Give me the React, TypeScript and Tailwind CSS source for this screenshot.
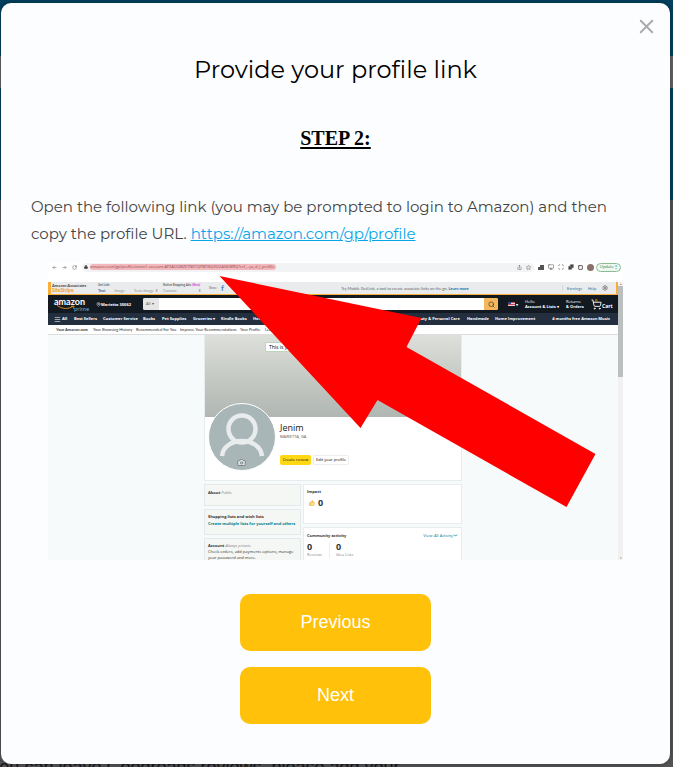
import React from "react";
import {
  ArrowLeft, ArrowRight, RotateCw, Lock, Star, Share, Monitor, Puzzle, Square, Scan,
  Settings, MapPin, Search, ShoppingCart, ChevronDown, ThumbsUp, Menu, Camera, X,
} from "lucide-react";

type Cell = { text: string; width: string };

const departments: Cell[] = [
  { text: "Best Sellers", width: "w-[29px]" },
  { text: "Customer Service", width: "w-[40px]" },
  { text: "Books", width: "w-[19px]" },
  { text: "Pet Supplies", width: "w-[31px]" },
  { text: "Groceries ▾", width: "w-[28px]" },
  { text: "Kindle Books", width: "w-[32px]" },
  { text: "Health & Household", width: "w-[160px]" },
  { text: "Beauty & Personal Care", width: "w-[54px]" },
  { text: "Handmade", width: "w-[28px]" },
  { text: "Home Improvement", width: "w-[52px]" },
  { text: "4 months free Amazon Music", width: "flex-1" },
];

const accountTabs: Cell[] = [
  { text: "Your Amazon.com", width: "w-[37px]" },
  { text: "Your Browsing History", width: "w-[43px]" },
  { text: "Recommended For You", width: "w-[44px]" },
  { text: "Improve Your Recommendations", width: "w-[60px]" },
  { text: "Your Profile", width: "w-[25px]" },
  { text: "Learn More", width: "w-[30px]" },
];

function BrowserBar() {
  return (
    <div className="flex h-5 items-start bg-white text-[4px] text-[#444]">
      <div className="flex h-[10px] w-full items-center pl-1">
        <ArrowLeft size={5} className="mr-[5px]" />
        <ArrowRight size={5} className="mr-[5px]" />
        <RotateCw size={5} className="mr-[5px]" />
        <div className="flex h-[9px] flex-1 items-center rounded-full bg-[#f1f3f4] pl-[2px] pr-[3px]">
          <Lock size={4} fill="#444" className="mr-[2px]" />
          <span className="w-[186px] overflow-hidden whitespace-nowrap rounded-sm bg-[#f2b8bb] leading-[6px] text-[#914b50]">
            amazon.com/gp/profile/amzn1.account.AFSAOOBZETNKTQPBTNQXO2AG6WRQ?ref_=ya_d_l_profile
          </span>
          <span className="flex-1" />
          <Share size={5} className="mr-1" />
          <Star size={5} />
        </div>
        <div className="ml-1 mr-[2px] flex items-center gap-1">
          <svg viewBox="0 0 6 6" className="h-[6px] w-[6px]"><path d="M0 6V3h2V1h4v5Z" fill="#555" /></svg>
          <Monitor size={6} />
          <Scan size={6} />
          <Puzzle size={6} fill="#444" />
          <Square size={5} strokeWidth={4} />
          <span className="h-[7px] w-[7px] rounded-full bg-[#8a706b]" />
          <span className="-ml-[2px] flex h-[9px] w-[25px] items-center justify-between rounded-full border border-[#8bbd94] bg-[#edf7ee] px-[3px] text-[#287a3c]">
            Update <b>⋮</b>
          </span>
        </div>
      </div>
    </div>
  );
}

function AssociatesBar() {
  return (
    <div className="flex h-[13px] items-center border-b border-l-[3px] border-r-2 border-[#f9ae3c] bg-[#e9ebec] text-left font-['Lato',sans-serif] text-[4px] leading-[5px] text-[#666]">
      <div className="w-[47px] pl-px">
        <p className="font-bold text-[#444]">Amazon Associates</p>
        <p className="text-[5px] font-bold text-[#f49a27]">SiteStripe</p>
      </div>
      <div className="w-[65px]">
        <p className="text-[3px] font-bold">Get Link:</p>
        <p className="flex justify-between pr-[5px] text-[#999]"><b className="text-[#2477b5]">Text</b><span>Image</span><span>Text+Image ⬍</span></p>
      </div>
      <div className="w-[46px]">
        <p className="text-[3px] font-bold">Native Shopping Ads: <span className="text-[#d43ad4]">(New)</span></p>
        <p className="flex justify-between pr-2 text-[#999]"><span>Custom</span><span>⬍</span></p>
      </div>
      <span className="w-[12px] text-[3px]">Share:</span>
      <b className="text-[8px] text-[#4c83bd]">f</b>
      <p className="flex-1 pl-6 text-center">Try Mobile GetLink, a tool to create associate links on the go. <b className="text-[#176daa]">Learn more</b></p>
      <div className="flex w-[54px] items-center gap-[6px] border-l border-[#d5d9db] pl-1 text-[#2e78a7]">
        <span>Earnings</span><span>Help</span><Settings size={6} className="text-[#444]" />
      </div>
    </div>
  );
}

function StoreHeader() {
  return (
    <div className="text-left">
      <div className="flex h-[18px] items-center bg-[#131921] text-[4px] font-bold leading-[5px] text-white">
        <div className="relative w-[48px] pl-[6px] font-['Lato',sans-serif]">
          <p className="text-[9px] leading-[9px]">amazon</p>
          <p className="pl-[20px] text-[6px] font-normal leading-[6px] text-[#6fa9c7]">prime</p>
          <svg viewBox="0 0 22 5" className="absolute left-[9px] top-[8px] h-[5px] w-[18px]" fill="none" stroke="#f79b20"><path d="M0 0Q10 7 20 1m-3 0h4l-1 3" /></svg>
        </div>
        <MapPin size={5} /><span className="w-[42px] whitespace-nowrap">Marietta 30062</span>
        <div className="flex h-3 flex-1 items-center overflow-hidden rounded-[2px] bg-white">
          <span className="h-3 w-4 bg-[#e6e6e6] pl-[3px] font-normal leading-[12px] text-[#555]">All ▾</span>
          <span className="flex-1" />
          <span className="flex h-3 w-[14px] items-center justify-center bg-[#f5b75b] text-[#222]"><Search size={7} /></span>
        </div>
        <span className="ml-[10px] flex items-center gap-px">
          <svg viewBox="0 0 7 4" className="h-1 w-[7px]"><path fill="#e9cfd3" d="M0 0h7v4H0z" /><path stroke="#cb4654" d="M0 .5h7M0 2.5h7" /><path fill="#31497f" d="M0 0h3v2H0z" /></svg>
          <span>▾</span>
        </span>
        <p className="ml-[7px] w-[41px] whitespace-nowrap"><span className="block font-normal">Hello</span>Account &amp; Lists ▾</p>
        <p className="w-[25px] whitespace-nowrap"><span className="block font-normal">Returns</span>&amp; Orders</p>
        <div className="relative">
          <ShoppingCart size={11} />
          <span className="absolute left-1 top-0 text-[4px] leading-[4px] text-[#f08804]">0</span>
        </div>
        <span className="w-[16px] pt-1 text-[5px]">Cart</span>
      </div>
      <div className="flex h-3 items-center bg-[#232f3e] pl-[6px] text-[4px] font-bold text-white">
        <Menu size={7} /><span className="w-[13px] pl-px">All</span>
        {departments.map((item) => (
          <span key={item.text} className={`${item.width} shrink-0 whitespace-nowrap last:pr-2 last:text-right`}>{item.text}</span>
        ))}
      </div>
      <div className="flex h-[10px] items-center border-b border-[#ddd] bg-white pl-2 font-['Lato',sans-serif] text-[4px] text-[#333] [&>*:first-child]:font-bold">
        {accountTabs.map((item) => (
          <span key={item.text} className={`${item.width} shrink-0 whitespace-nowrap`}>{item.text}</span>
        ))}
      </div>
    </div>
  );
}

function ProfileCard() {
  return (
    <div className="border border-t-0 border-[#e7eded] bg-white">
      <div className="flex h-[82px] justify-center bg-linear-to-b from-[#dddfda] to-[#b0b6b2] pt-[7px]">
        <span className="h-[10px] w-[136px] border border-[#bcd6bd] bg-white pl-[3px] text-[5px] leading-[8px]">This is your profile</span>
      </div>
      <div className="flex h-[63px]">
        <div className="relative -mt-[14px] ml-[3px] h-[68px] w-[68px] shrink-0 rounded-full border border-white bg-[#a8b6b7]">
          <svg viewBox="0 0 66 66" className="h-full w-full" fill="none" stroke="#e8eced" strokeWidth="4.5">
            <circle cx="33" cy="25" r="13.5" />
            <path d="M13 52C15 32 51 32 53 52" />
          </svg>
          <Camera size={9} className="absolute bottom-[3px] left-[28px] text-[#657374]" fill="#dce1e1" />
        </div>
        <div className="ml-1 pt-[5px]">
          <p className="text-[9px] leading-[12px] text-[#222]">Jenim</p>
          <p className="text-[4px] leading-[6px] text-[#555]">MARIETTA, GA</p>
          <div className="mt-[15px] flex gap-[2px] text-center text-[4px] leading-[9px]">
            <span className="w-[31px] rounded-[2px] bg-[#ffd814]">Create review</span>
            <span className="w-[36px] rounded-[2px] border border-[#eee] leading-[8px]">Edit your profile</span>
          </div>
        </div>
      </div>
    </div>
  );
}

function ProfileDetails() {
  return (
    <div className="mt-[3px] flex gap-[2px] text-[4px] leading-[6px] text-[#333]">
      <div className="flex w-[97px] flex-col gap-[3px]">
        <section className="h-[22px] border border-[#e4eaea] bg-[#f5f7f4] px-[3px] pt-[5px]"><b>About</b> <i className="text-[#888]">Public</i></section>
        <section className="h-[26px] border border-[#e4eaea] bg-[#f5f7f4] px-[3px] pt-1">
          <b className="block">Shopping lists and wish lists</b>
          <b className="block whitespace-nowrap pt-px text-[#007a88]">Create multiple lists for yourself and others</b>
        </section>
        <section className="h-[26px] border border-[#e4eaea] bg-[#f5f7f4] px-[3px] pt-1"><b>Account</b> <i className="text-[#888]">Always private</i><p>Check orders, add payments options, manage your password and more.</p></section>
      </div>
      <div className="flex flex-1 flex-col gap-[3px]">
        <section className="h-[40px] border border-[#e7eded] bg-white px-[3px] pt-1">
          <b>Impact</b>
          <p className="flex items-center gap-[3px] pt-[3px] text-[9px] leading-[10px]"><ThumbsUp size={6} className="ml-[2px] text-[#eaa31b]" fill="#ffe49c" /><b>0</b></p>
        </section>
        <section className="h-[37px] border border-[#e7eded] bg-white px-[3px] pt-1">
          <div className="flex justify-between"><b className="pt-px">Community activity</b><span className="flex items-center text-[#007a88]">View: All Activity <ChevronDown size={5} strokeWidth={4} /></span></div>
          <div className="flex pt-[3px]">
            <p className="w-[23px] border-r border-[#eee]"><b className="block text-[9px] leading-[10px]">0</b><span className="text-[#888]">Reviews</span></p>
            <p className="pl-[6px]"><b className="block text-[9px] leading-[10px]">0</b><span className="text-[#888]">Idea Lists</span></p>
          </div>
        </section>
      </div>
    </div>
  );
}

function ProfilePreview() {
  return (
    <figure className="relative mx-[17px] h-[298px] overflow-hidden bg-[#f6fafb] text-left font-['Open_Sans',sans-serif]" aria-label="Where to find the profile URL">
      <BrowserBar />
      <div className="flex">
        <div className="min-w-0 flex-1">
          <AssociatesBar />
          <StoreHeader />
          <div className="mx-auto h-[225px] w-[258px]">
            <ProfileCard />
            <ProfileDetails />
          </div>
        </div>
        <div className="flex w-[5px] flex-col items-center justify-between bg-[#f1f1f1] text-[3px] leading-[4px] text-[#777]">
          <div className="w-full text-center">▴<div className="h-[91px] bg-[#bcbfc0]" /></div>
          <span>▾</span>
        </div>
      </div>
      <svg viewBox="0 0 574 298" className="absolute inset-0 h-full w-full" aria-hidden="true">
        <path d="M171 14 373 56 358 85 547 192 518 245 329 138 312 166Z" fill="#f00" />
      </svg>
    </figure>
  );
}

export default function App() {
  return (
    <div className="relative min-h-screen overflow-hidden bg-[#555] p-[3px] pl-px">
      <div className="absolute inset-0 flex flex-col justify-between" aria-hidden="true">
        <div className="h-[200px] bg-[#00415f] pt-14"><div className="h-8 bg-[#666]" /></div>
        <p className="-mb-3 -ml-[11px] whitespace-nowrap font-['Liberation_Sans',sans-serif] text-[18px] leading-6 text-[#15171f]">You can leave Goodreads reviews, please add your</p>
      </div>
      <main role="dialog" aria-labelledby="dialog-title" className="relative rounded-[10px] bg-[#fcfdff] px-[30px] pb-10 pt-[51px] text-center shadow-[0_0_6px_rgba(0,0,0,0.35)]">
        <button type="button" aria-label="Close" className="absolute right-3 top-3 text-[#aaa]"><X size={23} strokeWidth={2} /></button>
        <h1 id="dialog-title" className="font-['Montserrat',sans-serif] text-[24px] leading-8 text-black">Provide your profile link</h1>
        <h2 className="mt-[38px] font-['Liberation_Serif',serif] text-[20px] font-bold leading-7 text-black underline decoration-2 underline-offset-2">STEP 2:</h2>
        <p className="mb-[15px] mt-[41px] text-left font-['Montserrat',sans-serif] text-[15px] leading-[27px] text-[#444]">
          Open the following link (you may be prompted to login to Amazon) and then copy the profile URL.{" "}
          <a href="https://amazon.com/gp/profile" className="text-[#08a5eb] underline">https://amazon.com/gp/profile</a>
        </p>
        <ProfilePreview />
        <div className="mt-[34px] flex flex-col items-center gap-4 font-['Liberation_Sans',sans-serif] text-[18px] text-white">
          <button type="button" className="h-[57px] w-[191px] rounded-[10px] bg-[#ffc10a]">Previous</button>
          <button type="button" className="h-[57px] w-[191px] rounded-[10px] bg-[#ffc10a]">Next</button>
        </div>
      </main>
    </div>
  );
}
